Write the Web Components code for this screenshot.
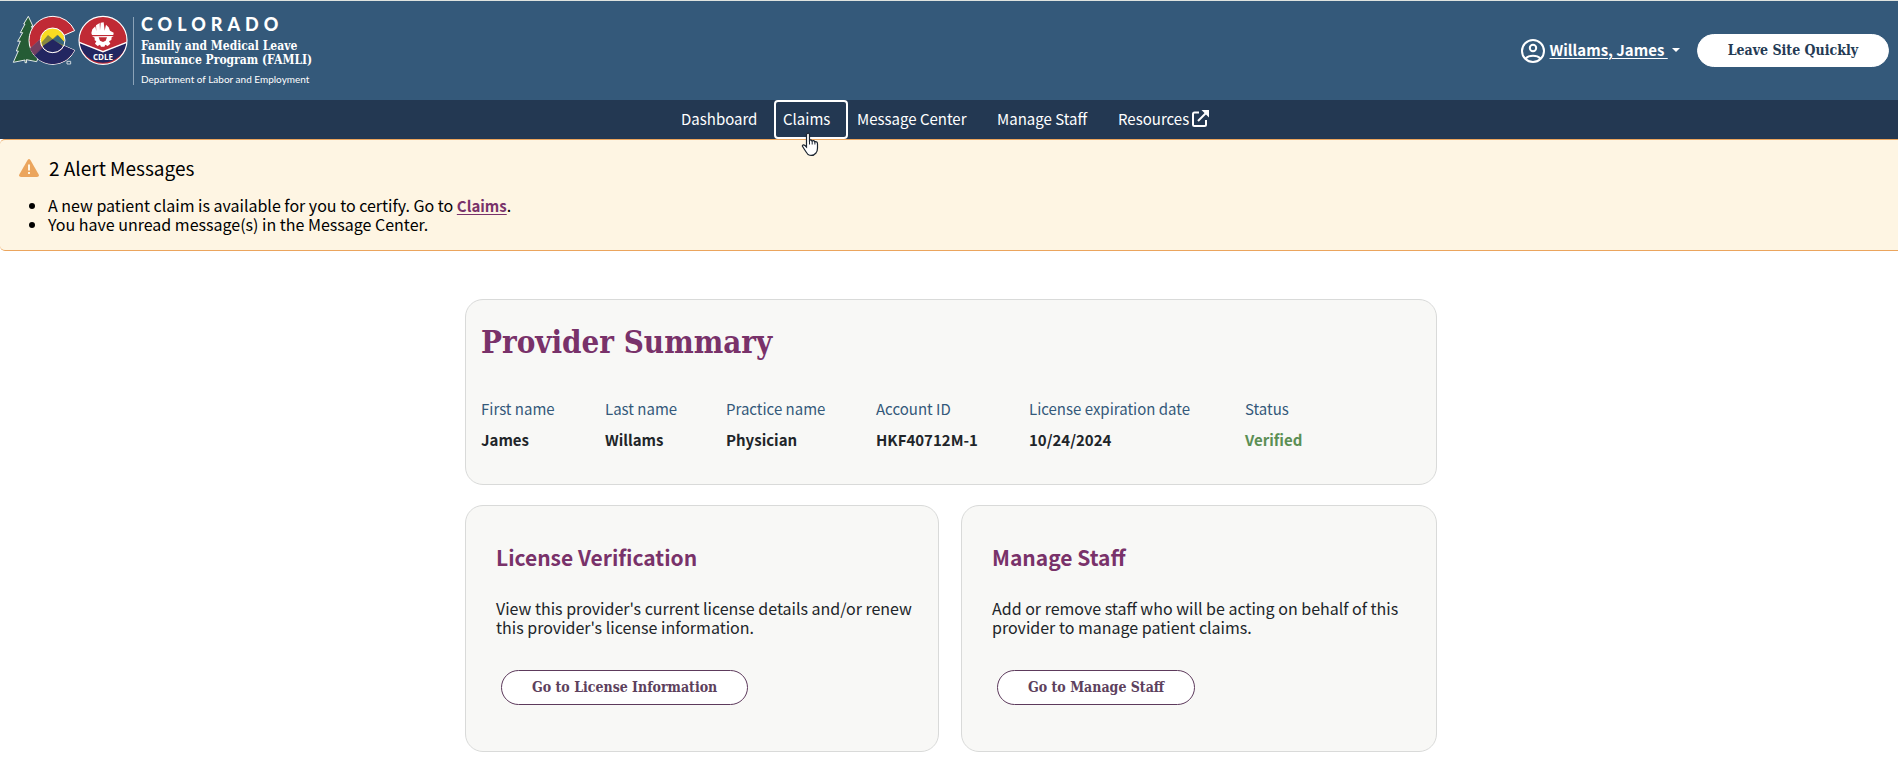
<!DOCTYPE html>
<html lang="en">
<head>
<meta charset="utf-8">
<title>Provider Dashboard</title>
<style>
  body {
    margin: 0;
    background: #fff;
    color: #212529;
    font: 16px/19px "Noto Sans CJK JP", "Noto Sans", sans-serif;
    --slab: "DejaVu Serif Condensed", "DejaVu Serif", serif;
    --plum: #79326a;
  }
  main { padding-left: 4px; }
  .wrap {
    max-width: 972px;
    margin: 48px auto 0;
    display: grid;
    grid-template-columns: 474px 1fr;
    gap: 20px 22px;
  }
  provider-summary { grid-column: 1 / -1; }
</style>
</head>
<body>
<site-header user="Willams, James"></site-header>
<site-nav></site-nav>
<alert-banner></alert-banner>
<main>
  <div class="wrap">
    <provider-summary></provider-summary>
    <action-card heading="License Verification" action="Go to License Information">View this provider's current license details and/or renew this provider's license information.</action-card>
    <action-card heading="Manage Staff" action="Go to Manage Staff">Add or remove staff who will be acting on behalf of this provider to manage patient claims.</action-card>
  </div>
</main>
<script>
const define = (name, html, setup) => customElements.define(name, class extends HTMLElement {
  connectedCallback() {
    if (this.shadowRoot) return;
    const root = this.attachShadow({ mode: 'open' });
    root.innerHTML = html;
    if (setup) setup(this, root);
  }
});

define('pill-button', `
<style>
  :host { display: inline-flex; }
  button {
    box-sizing: border-box;
    height: 35px;
    padding: 0 30px 2px;
    border: 1px solid #5d3a5c;
    border-radius: 18px;
    background: #fff;
    color: #5d415d;
    font: bold 14px/20px var(--slab);
    white-space: nowrap;
    cursor: pointer;
  }
  :host([plain]) button { height: 33px; border-color: #fff; color: #243a54; }
</style>
<button type="button"><slot></slot></button>`);

define('co-logo', `
<style>
  :host { display: flex; align-items: flex-start; color: #fff; }
  svg { display: block; width: 116px; height: 51px; }
  .words { margin: 2px 0 0 5px; padding-left: 7px; border-left: 1px solid #8ba3b8; }
  .state { font: 900 18px/18px Lato, sans-serif; letter-spacing: 5px; margin-top: -2px; }
  .program { font: bold 12px/14px var(--slab); margin-top: 6px; white-space: nowrap; }
  .dept { font: 10px/12px Lato, sans-serif; margin-top: 6px; white-space: nowrap; }
</style>
<svg viewBox="36 45 348 153" aria-label="Colorado and CDLE logo" role="img">
  <path d="M85 49 L99 79 L94 79 L105 102 L99 102 L112 128 L105 128 L122 153 L110 185 L79 179 L80 188 L75 188 L75 180 L40 187 L55 153 L49 153 L61 123 L53 124 L68 98 L61 98 L75 72 L71 72Z" fill="#255c35" stroke="#fff" stroke-width="2.6"/>
  <path d="M159 49 A72 72 0 0 1 224 92 L192 106 A36 36 0 1 0 192 137 L224 151 A72 72 0 0 1 159 193 A72 72 0 0 1 159 49Z" fill="#c02a35" stroke="#fff" stroke-width="3"/>
  <path d="M89 146 L125 113 A36 36 0 0 0 127 141 L105 167 Q96 158 89 146Z" fill="#724061"/>
  <path d="M103 166 L128 141 A36 36 0 0 0 192 137 L223 151 A72 72 0 0 1 103 166Z" fill="#232661"/>
  <circle cx="158" cy="121" r="36" fill="#f8dc21"/>
  <path d="M124 128 L144 105 L158 117 L172 104 L193 126 A36 36 0 0 1 124 128Z" fill="#87883e"/>
  <path d="M158 119 L174 106 L193 126 L191 136Z" fill="#37667d"/>
  <path d="M127 139 L158 118 L190 139 A36 36 0 0 1 127 139Z" fill="#232661"/>
  <circle cx="158" cy="121" r="37" fill="none" stroke="#fff" stroke-width="3"/>
  <path d="M89 146 L124 114 M104 166 L129 142" stroke="#9c6980" stroke-width="1"/>
  <path d="M201 184h11v8h-11z" fill="none" stroke="#cdd6dd" stroke-width="3"/>
  <circle cx="309" cy="121" r="72" fill="#c02a35"/>
  <path d="M238 128 L309 156 L380 128 A72 72 0 0 1 238 128Z" fill="#232661"/>
  <path d="M238 127 L309 155 L380 127" fill="none" stroke="#fff" stroke-width="4"/>
  <circle cx="309" cy="121" r="72" fill="none" stroke="#fff" stroke-width="3.5"/>
  <path d="M274 99 L277 88 L286 79 L289 94 L288 76 L299 69 L300 91 L302 68 L311 67 L314 92 L318 74 L326 82 L330 92 L341 98 L340 105 L276 105Z" fill="#fff"/>
  <path d="M276 109 L341 108 L335 112 L334 120 L327 124 L331 131 L323 138 L316 134 L313 140 L303 140 L300 134 L293 138 L285 131 L289 124 L284 121 L284 113Z" fill="#fff"/>
  <path d="M296 112 H321 L317 122 L309 126 L300 122Z" fill="#c02a35"/>
  <text x="309" y="179" text-anchor="middle" fill="#fff" font-family="Open Sans, sans-serif" font-weight="bold" font-size="24">CDLE</text>
</svg>
<div class="words">
  <div class="state">COLORADO</div>
  <div class="program">Family and Medical Leave<br>Insurance Program (FAMLI)</div>
  <div class="dept">Department of Labor and Employment</div>
</div>`);

define('site-header', `
<style>
  :host { display: block; background: #34597a; border-top: 1px solid #dfe3df; }
  header { display: flex; justify-content: space-between; align-items: flex-start; padding: 14px 9px 13px 12px; min-height: 72px; }
  .account { display: flex; align-items: center; margin-top: 19px; }
  .user { display: flex; align-items: center; margin-right: 17px; padding: 0; border: 0; background: none; color: #fff; font: bold 15px/19px "Noto Sans CJK JP", sans-serif; cursor: pointer; white-space: pre; }
  .user span { text-decoration: underline; text-underline-offset: 2px; text-decoration-thickness: 1px; margin-bottom: 2px; }
  .face { width: 24px; height: 24px; margin-right: 5px; }
  .caret { width: 8px; height: 4px; margin: 0 0 2px 4px; }
</style>
<header>
  <co-logo></co-logo>
  <div class="account">
    <button class="user" type="button" aria-haspopup="menu"><svg class="face" viewBox="0 0 24 24" fill="none" stroke="#fff" stroke-width="2"><circle cx="12" cy="12" r="11"/><circle cx="12" cy="9" r="3.2"/><path d="M4.5 19.5 C8 15.8 16 15.8 19.5 19.5"/></svg><span></span><svg class="caret" viewBox="0 0 8 4"><path d="M0 0H8L4 4Z" fill="#fff"/></svg></button>
    <pill-button plain>Leave Site Quickly</pill-button>
  </div>
</header>`, (host, root) => {
  root.querySelector('.user span').textContent = host.getAttribute('user') + ' ';
});

define('site-nav', `
<style>
  :host { display: block; background: #233852; }
  nav { display: grid; grid-template-columns: 102px 74px 140px 121px 117px; justify-content: center; }
  a { position: relative; box-sizing: border-box; height: 39px; padding: 0 7px; border: 2px solid transparent; border-radius: 4px; color: #fff; line-height: 34px; text-decoration: none; white-space: nowrap; font-size: 15px; }
  a.current { border-color: #fff; }
  .out { width: 17px; height: 17px; margin-left: 3px; vertical-align: -2px; }
  .hand { position: absolute; z-index: 1; left: 25px; top: 30px; width: 18px; height: 25px; }
</style>
<nav aria-label="Main">
  <a href="#dashboard">Dashboard</a>
  <a href="#claims" class="current">Claims<svg class="hand" viewBox="0 0 18 25"><path d="M6.5 1.5 Q8 .5 8.5 2.5 V8.5 Q10 7 11 9 Q13 7.8 13.7 9.8 Q16.5 9.2 16.5 12 V16 Q16.5 19 15 21 Q11.500 25 7 22.500 Q5 20 3.5 17.5 L1.3 14 Q2 12 4 13.5 L5.5 15 V2.5 Q5.7 1.6 6.5 1.5Z" fill="#fff" stroke="#1b2430" stroke-width="1.2"/><path d="M8.5 8.5V12.5M11.2 9V12.5M13.9 10V12.5" stroke="#1b2430"/></svg></a>
  <a href="#messages">Message Center</a>
  <a href="#staff">Manage Staff</a>
  <a href="#resources">Resources<svg class="out" viewBox="0 0 17 17" fill="none" stroke="#fff" stroke-width="2"><path d="M7 2.5H2.5Q1 2.5 1 4V14.5Q1 16 2.5 16H12.5Q14 16 14 14.5V10"/><path d="M6 11L14 3"/><path d="M9.5 0H17V7.5Z" fill="#fff" stroke="none"/></svg></a>
</nav>`);

define('alert-banner', `
<style>
  :host { display: block; box-sizing: border-box; padding: 16px 19px; border: 1px solid #eba55d; border-width: 1px 0; border-radius: 5px 0 0 5px; background: #fef5e3; color: #000; }
  h2 { display: flex; align-items: center; gap: 10px; margin: 0 0 16px; font-size: 19px; font-weight: 400; line-height: 24px; }
  h2 svg { width: 20px; height: 18px; }
  ul { margin: 0; padding-left: 29px; }
  a { color: var(--plum); font-weight: bold; font-size: 15px; text-underline-offset: 2px; }
</style>
<h2><svg viewBox="0 0 20 18"><path d="M8.6 1Q10-.8 11.4 1L19.7 15.5Q20.5 18 18 18H2Q-.5 18 .3 15.5Z" fill="#eba55d"/><path d="M9 5.5h2v6H9zM9 13h2v2H9z" fill="#fef5e3"/></svg>2 Alert Messages</h2>
<ul>
  <li>A new patient claim is available for you to certify. Go to <a href="#claims">Claims</a>.</li>
  <li>You have unread message(s) in the Message Center.</li>
</ul>`);

const cardBox = `box-sizing: border-box; border: 1px solid #d9dad9; border-radius: 18px; background: #f8f8f6;`;

define('provider-summary', `
<style>
  :host { display: block; ${cardBox} padding: 24px 15px 35px; }
  h1 { margin: 0 0 39px; color: var(--plum); font: bold 31px/36px var(--slab); }
  dl { display: grid; grid-template-columns: 124px 121px 150px 153px 216px auto; margin: 0; }
  dt { margin-bottom: 12px; color: #34597a; font-size: 15px; line-height: 19px; white-space: nowrap; }
  dd { margin: 0; font-size: 15px; font-weight: bold; line-height: 19px; white-space: nowrap; }
  .ok { color: #5b8f54; }
</style>
<h1>Provider Summary</h1>
<dl>
  <div><dt>First name</dt><dd>James</dd></div>
  <div><dt>Last name</dt><dd>Willams</dd></div>
  <div><dt>Practice name</dt><dd>Physician</dd></div>
  <div><dt>Account ID</dt><dd>HKF40712M-1</dd></div>
  <div><dt>License expiration date</dt><dd>10/24/2024</dd></div>
  <div><dt>Status</dt><dd class="ok">Verified</dd></div>
</dl>`);

define('action-card', `
<style>
  :host { display: block; ${cardBox} padding: 38px 22px 46px 30px; }
  h2 { margin: 0 0 29px; color: var(--plum); font-size: 21px; font-weight: bold; line-height: 26px; }
  p { margin: 0 0 33px; }
  pill-button { margin-left: 5px; vertical-align: top; }
</style>
<h2></h2>
<p><slot></slot></p>
<pill-button></pill-button>`, (host, root) => {
  root.querySelector('h2').textContent = host.getAttribute('heading');
  root.querySelector('pill-button').textContent = host.getAttribute('action');
});
</script>
</body>
</html>
